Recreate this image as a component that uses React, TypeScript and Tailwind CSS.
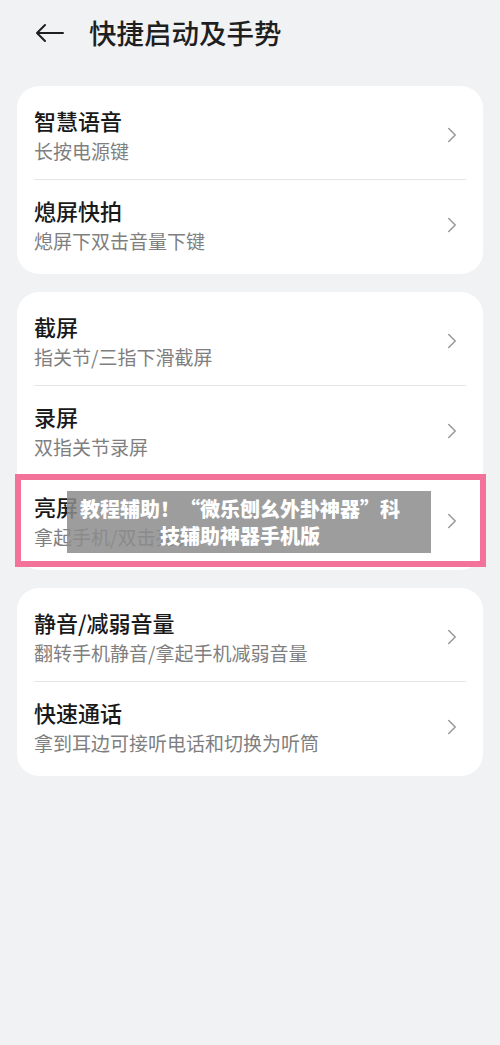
import { ChevronRight } from "lucide-react";

type Item = { title: string; desc: string };

const groups: Item[][] = [
  [
    { title: "智慧语音", desc: "长按电源键" },
    { title: "熄屏快拍", desc: "熄屏下双击音量下键" },
  ],
  [
    { title: "截屏", desc: "指关节/三指下滑截屏" },
    { title: "录屏", desc: "双指关节录屏" },
    { title: "亮屏", desc: "拿起手机/双击亮屏" },
  ],
  [
    { title: "静音/减弱音量", desc: "翻转手机静音/拿起手机减弱音量" },
    { title: "快速通话", desc: "拿到耳边可接听电话和切换为听筒" },
  ],
];

const Row = ({ item, divider }: { item: Item; divider: boolean }) => (
  <div className="relative flex h-[90px] items-center pl-[17px] pr-[18px]">
    <div className="flex flex-1 flex-col">
      <span className="text-[22px] leading-[30px] font-medium text-[#191919]">
        {item.title}
      </span>
      <span className="text-[19px] leading-[31px] text-[#7f7f7f]">
        {item.desc}
      </span>
    </div>
    <ChevronRight className="h-[26px] w-[26px] text-[#9a9a9a]" strokeWidth={1.4} />
    {divider && (
      <div className="absolute bottom-0 left-[17px] right-[17px] h-px bg-[#e6e6e6]" />
    )}
  </div>
);

export default function App() {
  return (
    <div
      className="min-h-[1045px] w-[500px] bg-[#f1f2f4]"
      style={{ fontFamily: '"Noto Sans CJK SC", "Noto Sans", sans-serif' }}
    >
      <div className="flex h-[66px] items-center pl-[34px]">
        <svg width="31" height="20" viewBox="0 0 31 20" fill="none">
          <path
            d="M29 10H3M11 2L3 10l8 8"
            stroke="#1f1f1f"
            strokeWidth="2"
            strokeLinecap="round"
            strokeLinejoin="round"
          />
        </svg>
        <span className="ml-[24px] text-[27.5px] font-medium text-[#1f1f1f]">
          快捷启动及手势
        </span>
      </div>

      <div className="mt-[20px] flex flex-col gap-[18px] px-[17px]">
        {groups.map((g, gi) => (
          <div key={gi} className="rounded-[22px] bg-white py-[4px]">
            {g.map((it, i) =>
              it.title === "亮屏" ? (
                <div key={i} className="relative">
                  <Row item={it} divider={false} />
                  <div className="absolute -left-[2px] -right-[3px] -top-[2px] -bottom-[1px] border-[6px] border-[#f2729a]" />
                  <div className="absolute left-[50px] top-[15px] flex h-[62px] w-[364px] flex-col items-center justify-center bg-[#8c8c8c]/85 pr-[18px] text-[20px] font-black leading-[27px] text-white">
                    <span className="whitespace-nowrap">教程辅助！“微乐刨幺外卦神器”科</span>
                    <span>技辅助神器手机版</span>
                  </div>
                </div>
              ) : (
                <Row key={i} item={it} divider={i < g.length - 1} />
              )
            )}
          </div>
        ))}
      </div>
    </div>
  );
}
